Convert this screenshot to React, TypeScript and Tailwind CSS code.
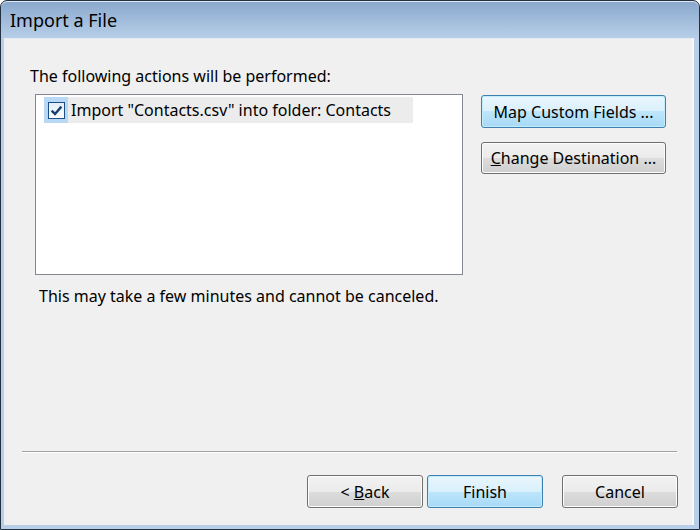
import React from 'react';

const font = { fontFamily: '"Noto Sans", "Open Sans", Arial, sans-serif' };

const Button: React.FC<{ primary?: boolean; className?: string; children: React.ReactNode }> = ({ primary, className = '', children }) => {
  return (
    <button
      className={`relative flex items-center justify-center rounded-[3px] border text-[16px] text-black ${
        primary
          ? 'border-[#3c7fb1] bg-[linear-gradient(#eaf6fd_0%,#d9f0fc_50%,#bee6fd_50%,#a7d9f5_100%)] shadow-[inset_0_0_0_1px_#c5ecfd]'
          : 'border-[#707070] bg-[linear-gradient(#f2f2f2_0%,#ebebeb_50%,#dddddd_50%,#cfcfcf_100%)] shadow-[inset_0_0_0_1px_#fcfcfc]'
      } ${className}`}
    >
      {children}
    </button>
  );
};

const App: React.FC = () => {
  return (
    <div className="w-[700px] h-[530px] overflow-hidden bg-white" style={font}>
      <div className="w-full h-full flex flex-col rounded-t-[7px] border border-[#22303f] bg-[linear-gradient(#8aa8cd,#b7cfe8_38px,#b7cfe8)] shadow-[inset_0_1px_0_#dfe9f5]">
        {/* title bar */}
        <div className="h-[37px] flex items-center pl-[9px] pt-[2px] text-[18px] text-black">Import a File</div>

        {/* window body */}
        <div className="flex-1 flex flex-col ml-[3px] mr-[5px] mb-[4px] bg-[#f0f0f0] border-t border-[#e3ebf4] border-r-2 border-r-[#f8f8f8]">
          <div className="ml-[26px] mt-[27px] h-[20px] leading-[20px] text-[16px] text-black">
            The following actions will be performed:
          </div>

          <div className="flex mt-[8px]">
            <div className="flex flex-col">
              <div className="ml-[31px] w-[428px] h-[181px] bg-white border border-[#828790] pt-[2px] pl-[8px]">
                <div className="flex items-center h-[26px] w-[369px] bg-[#ececec]">
                  <div className="w-[24px] h-[26px] bg-[#b8d8f5] flex items-center justify-center">
                    <div className="w-[17px] h-[17px] border border-[#1c4f82] bg-[linear-gradient(#e4eef8,#fdfeff)] flex items-center justify-center">
                      <svg width="13" height="13" viewBox="0 0 12 12">
                        <path d="M1.5 6.2 L4.6 9.2 L10.5 2.4" fill="none" stroke="#1d3f6e" strokeWidth="2.2" />
                      </svg>
                    </div>
                  </div>
                  <span className="ml-[3px] text-[16px] text-black leading-[20px]">Import "Contacts.csv" into folder: Contacts</span>
                </div>
              </div>
              <div className="ml-[35px] mt-[11px] h-[20px] leading-[20px] text-[16px] text-black">
                This may take a few minutes and cannot be canceled.
              </div>
            </div>

            <div className="ml-[18px] mt-[1px] flex flex-col gap-[14px]">
              <Button primary className="w-[185px] h-[33px]">Map Custom Fields ...</Button>
              <Button className="w-[185px] h-[32px]">
                <span><span className="underline">C</span>hange Destination ...</span>
              </Button>
            </div>
          </div>

          <div className="flex-1" />

          <div className="ml-[18px] mr-[15px] border-t border-[#a0a0a0] border-b border-b-white" />

          <div className="flex justify-end mt-[22px] mb-[17px] pr-[14px]">
            <Button className="w-[116px] h-[33px]">
              <span>&lt; <span className="underline">B</span>ack</span>
            </Button>
            <Button primary className="w-[116px] h-[33px] ml-[4px]">Finish</Button>
            <Button className="w-[116px] h-[33px] ml-[19px]">Cancel</Button>
          </div>
        </div>
      </div>
    </div>
  );
};

export default App;
